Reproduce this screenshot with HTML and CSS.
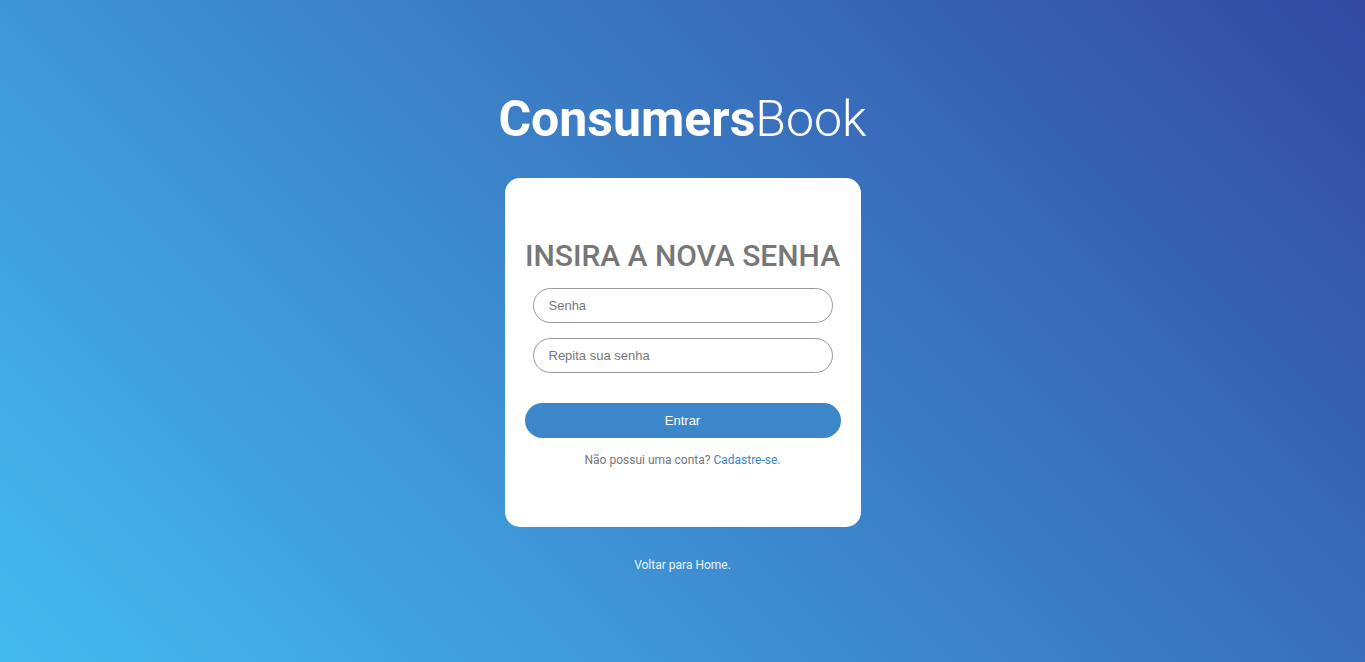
FILE: index.html
```html
<!DOCTYPE html>
<html lang="pt-BR">
<head>
<meta charset="utf-8">
<title>ConsumersBook - Nova senha</title>
<link rel="stylesheet" href="styles.css">
</head>
<body>
<main class="page">
  <h1 class="logo"><span class="logo-bold">Consumers</span><span class="logo-light">Book</span></h1>
  <form class="card">
    <h2 class="card-title">INSIRA A NOVA SENHA</h2>
    <input class="field" type="password" placeholder="Senha">
    <input class="field" type="password" placeholder="Repita sua senha">
    <button class="btn" type="button">Entrar</button>
    <p class="signup">Não possui uma conta? <a href="#" class="signup-link">Cadastre-se.</a></p>
  </form>
  <a href="#" class="back">Voltar para Home.</a>
</main>
</body>
</html>
```
FILE: styles.css
```css
* { box-sizing: border-box; }
html, body { margin: 0; padding: 0; }
body {
  min-height: 100vh;
  background: linear-gradient(45deg, #44bbf0 0%, #3349a2 100%);
  font-family: Roboto, "Liberation Sans", sans-serif;
}
.page {
  display: flex;
  flex-direction: column;
  align-items: center;
  padding-top: 90px;
}
.logo {
  margin: 0;
  font-size: 50px;
  line-height: 59px;
  color: #fff;
  font-weight: 400;
}
.logo-bold { font-weight: 700; }
.logo-light { font-weight: 300; }
.card {
  margin-top: 29px;
  width: 356px;
  height: 349px;
  background: #fff;
  border-radius: 15px;
  display: flex;
  flex-direction: column;
  align-items: center;
  padding-top: 60px;
}
.card-title {
  margin: 0 0 14px;
  font-size: 30px;
  line-height: 36px;
  font-weight: 500;
  color: #777;
  white-space: nowrap;
}
.field {
  width: 300px;
  height: 35px;
  border: 1px solid #999;
  border-radius: 18px;
  padding: 0 15px;
  font-family: "Liberation Sans", Arial, sans-serif;
  font-size: 13px;
  color: #555;
  margin-bottom: 15px;
  outline: none;
}
.field::placeholder { color: #777; }
.btn {
  margin-top: 15px;
  width: 316px;
  height: 35px;
  border: none;
  border-radius: 18px;
  background: #3c87c9;
  color: #fff;
  font-family: "Liberation Sans", Arial, sans-serif;
  font-size: 13px;
}
.signup {
  margin: 15px 0 0;
  font-size: 12px;
  line-height: 14px;
  color: #777;
}
.signup-link {
  color: #3c87c9;
  text-decoration: none;
}
.back {
  margin-top: 31px;
  font-size: 12px;
  line-height: 14px;
  color: #eaf3fb;
  text-decoration: none;
}
```
